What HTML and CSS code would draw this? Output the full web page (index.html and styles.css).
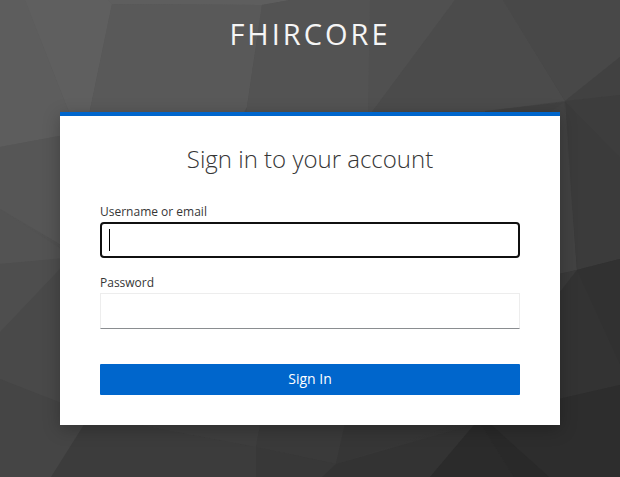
FILE: index.html
```html
<!DOCTYPE html>
<html lang="en">
<head>
<meta charset="utf-8">
<title>Sign in to FHIRCORE</title>
<link rel="stylesheet" href="styles.css">
</head>
<body>
<svg class="backdrop" viewBox="0 0 620 477" preserveAspectRatio="none" aria-hidden="true">
  <defs>
    <linearGradient id="shade" x1="0" y1="0" x2="1" y2="1">
      <stop offset="0" stop-color="#5e5e5e"/>
      <stop offset=".5" stop-color="#484848"/>
      <stop offset="1" stop-color="#292929"/>
    </linearGradient>
  </defs>
  <rect width="620" height="477" fill="url(#shade)"/>
  <path fill="#5d5d5d" d="M0 0H25L72 120L60 136L0 147Z"/>
  <path fill="#5f5f5f" d="M25 0H108L112 4L88 120H72Z"/>
  <path fill="#5e5e5e" d="M108 0H290L262 5L112 4Z"/>
  <path fill="#595959" d="M112 4L262 5L247 107L240 120H88Z"/>
  <path fill="#535353" d="M262 5L290 0H370V120H247V107Z"/>
  <path fill="#505050" d="M370 0H455L372 112H368Z"/>
  <path fill="#4b4b4b" d="M455 0H503L565 101L485 111L372 112Z"/>
  <path fill="#484848" d="M503 0H620V57L565 101Z"/>
  <path fill="#414141" d="M620 57V95L565 101Z"/>
  <path fill="#404040" d="M485 111L565 102V120H485Z"/>
  <path fill="#424242" d="M564 102L577 270L550 276V112Z"/>
  <path fill="#3b3b3b" d="M565 101L620 157V259L577 270Z"/>
  <path fill="#3d3d3d" d="M565 101L620 95V157Z"/>
  <path fill="#3a3a3a" d="M550 276L577 270L550 305Z"/>
  <path fill="#333" d="M577 270L620 259V385L550 401V305Z"/>
  <path fill="#313131" d="M577 270L620 259V364Z"/>
  <path fill="#2d2d2d" d="M550 401L620 385V477H549L485 420H550Z"/>
  <path fill="#565656" d="M0 147L75 133V253L0 209Z"/>
  <path fill="#535353" d="M0 209L75 258L0 264Z"/>
  <path fill="#4e4e4e" d="M0 264L75 257V258L0 332Z"/>
  <path fill="#494949" d="M0 332L75 253V413L0 379Z"/>
  <path fill="#454545" d="M0 379L95 416L51 477H0Z"/>
  <path fill="#3c3c3c" d="M90 415L256 447V477H51Z"/>
  <path fill="#3e3e3e" d="M90 415H262L256 447Z"/>
  <path fill="#3a3a3a" d="M262 415H347L336 464L256 447Z"/>
  <path fill="#383838" d="M256 447L336 464L322 477H256Z"/>
  <path fill="#363636" d="M347 415H483L336 464Z"/>
  <path fill="#333" d="M336 464L473 425L430 477H322Z"/>
  <path fill="#2b2b2b" d="M478 420L514 477H430Z"/>
  <path fill="#292929" d="M478 420H486L549 477H514Z"/>
</svg>
<div class="login">
  <header class="brand">FHIRCORE</header>
  <main class="card">
    <h1 class="title">Sign in to your account</h1>
    <form class="form">
      <label class="label" for="username">Username or email</label>
      <div class="field focused" id="username" role="textbox"><span class="caret"></span></div>
      <label class="label" for="password">Password</label>
      <div class="field" id="password" role="textbox"></div>
      <button class="submit" type="button">Sign In</button>
    </form>
  </main>
</div>
</body>
</html>
```
FILE: styles.css
```css
* { box-sizing: border-box; }
body {
  margin: 0;
  height: 477px;
  overflow: hidden;
  background: #444;
  font-family: "Open Sans", sans-serif;
  color: #363636;
}
.backdrop {
  position: absolute;
  inset: 0;
  width: 100%;
  height: 100%;
  z-index: -1;
}
.login {
  display: flex;
  flex-direction: column;
  align-items: center;
}
.brand {
  height: 112px;
  padding-top: 15px;
  color: #f5f5f5;
  font-size: 29px;
  line-height: 37px;
  letter-spacing: 3px;
}
.card {
  width: 500px;
  height: 313px;
  padding: 25px 40px 30px;
  border-top: 4px solid #06c;
  background: #fff;
  box-shadow: 0 4px 16px rgba(0, 0, 0, .25);
}
.title {
  margin: 0 0 26px;
  font-size: 24px;
  font-weight: 300;
  line-height: 36px;
  text-align: center;
}
.form {
  display: flex;
  flex-direction: column;
}
.label {
  height: 19px;
  font-size: 12px;
  line-height: 18px;
}
.field {
  display: flex;
  align-items: center;
  height: 36px;
  margin-bottom: 16px;
  padding: 0 8px;
  border: 1px solid #ededed;
  border-bottom-color: #8a8d90;
  background: #fff;
}
.focused {
  padding: 0 7px;
  border: 2px solid #101010;
  border-radius: 4px;
}
.caret {
  width: 1px;
  height: 22px;
  background: #000;
}
.submit {
  height: 31px;
  margin-top: 19px;
  padding: 0 0 2px;
  border: 0;
  border-radius: 1px;
  background: #06c;
  color: #fff;
  font: 14px/29px "Open Sans", sans-serif;
}
```
